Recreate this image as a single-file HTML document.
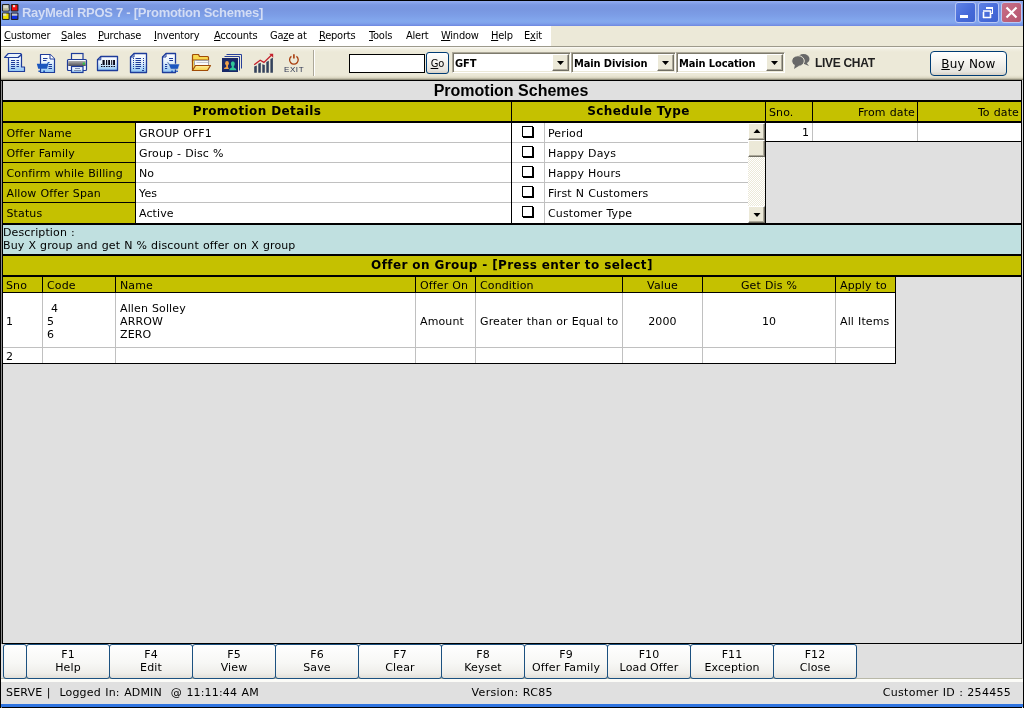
<!DOCTYPE html>
<html><head><meta charset="utf-8"><title>RayMedi RPOS 7 - [Promotion Schemes]</title>
<style>
*{box-sizing:border-box;margin:0;padding:0}
html,body{width:1024px;height:708px;overflow:hidden;background:#000}
body{position:relative;font-family:"DejaVu Sans","Liberation Sans",sans-serif;font-size:11px;color:#000;line-height:13px}
#win{position:absolute;left:0;top:0;width:1024px;height:708px;background:#000;overflow:hidden;will-change:transform}
#win div,#win svg{position:absolute}
.t{white-space:pre}
u{text-decoration:underline}
.g{background:#e0e0e0}
.y{background:#c5c100}
.w{background:#fff}
.k{background:#000}
.lg{background:#c0c0c0}
.cy{background:#c0e0e0}
.bg{background:#ece9d8}
.v{font:11px/13px "DejaVu Sans","Liberation Sans",sans-serif;letter-spacing:0.12px;word-spacing:0.4px}
.b12{font:bold 12px/14px "DejaVu Sans","Liberation Sans",sans-serif;letter-spacing:0.4px}
.m{font:11px/13px "DejaVu Sans Condensed","Liberation Sans",sans-serif;letter-spacing:-0.22px}
.tb{font:bold 11px/13px "DejaVu Sans Condensed","Liberation Sans",sans-serif;letter-spacing:-0.12px}
.r{text-align:right}
.c{text-align:center}
.xpb{border:1px solid #003c74;border-radius:3px;background:linear-gradient(180deg,#ffffff 0%,#f4f3ee 45%,#e6e5df 85%,#d6d0c5 100%)}
.fk{border:1px solid #1c5180;border-radius:3px;background:linear-gradient(180deg,#ffffff 0%,#f7f7f5 55%,#efeeea 85%,#e2dfd8 100%);text-align:center;font:11px/13px "DejaVu Sans","Liberation Sans",sans-serif;letter-spacing:0.12px;padding-top:3px;white-space:pre}
.cmb{background:#fff;border:1px solid;border-color:#aca899 #fff #fff #aca899;box-shadow:inset 1px 1px 0 #7d7a6c, inset -1px -1px 0 #ece9d8}
.cbtn{background:#ece9d8;border:1px solid;border-color:#fff #716f64 #716f64 #fff;box-shadow:inset -1px -1px 0 #aca899}
.chk{background:#fff;border:1px solid #000;box-shadow:1px 1px 0 #000}
</style></head><body>
<div id="win">

<div class="" style="left:1px;top:1px;width:1022px;height:25px;background:linear-gradient(180deg,#93adf0 0px,#86a2ea 2px,#7b98e2 4px,#7896e0 8px,#7c9de6 14px,#83a8ee 20px,#81a4ec 22px,#7692e6 24px,#6c86de 25px)"></div>
<svg style="left:2px;top:4px" width="17" height="16" viewBox="0 0 15.500 15" preserveAspectRatio="none">
<rect x="0" y="0" width="7" height="7" rx="1" fill="#222"/><rect x="1" y="1" width="5" height="5" fill="#d8d8c8"/><rect x="1" y="4" width="5" height="2" fill="#b8b890"/>
<rect x="8" y="0" width="7" height="7" rx="1" fill="#222"/><rect x="9" y="1" width="5" height="5" fill="#f01010"/><rect x="10" y="1" width="2" height="2" fill="#e8d8d0"/>
<rect x="0" y="8" width="7" height="7" rx="1" fill="#222"/><rect x="1" y="9" width="5" height="5" fill="#f0e000"/><rect x="1" y="9" width="3" height="2" fill="#e0e0d0"/>
<rect x="8" y="8" width="7" height="7" rx="1" fill="#222"/><rect x="9" y="9" width="5" height="5" fill="#1030e0"/><rect x="9" y="9" width="5" height="2" fill="#c8c8c0"/>
</svg>
<div class="t " style="left:22px;top:5px;font:bold 13px/16px 'Liberation Sans',sans-serif;color:#d3ddf5;letter-spacing:-0.27px">RayMedi RPOS 7 - [Promotion Schemes]</div>
<div style="left:955px;top:2px;width:21px;height:21px;border-radius:3px;border:1px solid #b9c8f4;background:linear-gradient(135deg,#5f82e6,#4569d8 60%,#3f63d0)"><div style="left:4px;top:12px;width:8px;height:3px;background:#fff"></div></div>
<div style="left:978px;top:2px;width:21px;height:21px;border-radius:3px;border:1px solid #b9c8f4;background:linear-gradient(135deg,#5f82e6,#4569d8 60%,#3f63d0)"><svg style="left:0;top:0" width="19" height="19" viewBox="0 0 19 19"><path d="M7 5.5h7M7 4.5h7M13.500 4v7M7.5 4v2M11 10.500h3" stroke="#fff" stroke-width="1" fill="none"/><path d="M4 8h8M4.500 9v6M4 14.500h8M11.500 8v7" stroke="#fff" stroke-width="1.600" fill="none"/></svg></div>
<div style="left:1001px;top:2px;width:21px;height:21px;border-radius:3px;border:1px solid #b9c8f4;background:linear-gradient(135deg,#c8708a,#bd5f78 60%,#b3566e)"><svg style="left:0;top:0" width="19" height="19" viewBox="0 0 19 19"><path d="M4.500 4.500l10 10M14.500 4.500l-10 10" stroke="#fff" stroke-width="2.200" fill="none"/></svg></div>
<div class="bg" style="left:1px;top:26px;width:1022px;height:20px;"></div>
<div class="w" style="left:1px;top:26px;width:550px;height:20px;"></div>
<div class="t m" style="left:4px;top:29px;"><u>C</u>ustomer</div>
<div class="t m" style="left:61px;top:29px;"><u>S</u>ales</div>
<div class="t m" style="left:98px;top:29px;"><u>P</u>urchase</div>
<div class="t m" style="left:154px;top:29px;"><u>I</u>nventory</div>
<div class="t m" style="left:214px;top:29px;"><u>A</u>ccounts</div>
<div class="t m" style="left:270px;top:29px;">Ga<u>z</u>e at</div>
<div class="t m" style="left:319px;top:29px;"><u>R</u>eports</div>
<div class="t m" style="left:369px;top:29px;"><u>T</u>ools</div>
<div class="t m" style="left:406px;top:29px;">Alert</div>
<div class="t m" style="left:441px;top:29px;"><u>W</u>indow</div>
<div class="t m" style="left:491px;top:29px;"><u>H</u>elp</div>
<div class="t m" style="left:524px;top:29px;">E<u>x</u>it</div>
<div class="" style="left:1px;top:46px;width:1022px;height:1px;background:#9d9a8c"></div>
<div class="" style="left:1px;top:47px;width:1022px;height:33px;background:linear-gradient(180deg,#fbfaf6 0%,#f1efe2 6%,#ece9d8 15%,#ece9d8 85%,#e0dcc8 92%,#b5b19c 97%,#6c6a5c 100%)"></div>
<svg style="left:0;top:0" width="0" height="0"><defs>
<linearGradient id="gb" x1="0" y1="0" x2="0" y2="1"><stop offset="0" stop-color="#ffffff"/><stop offset="0.45" stop-color="#e4f1fd"/><stop offset="1" stop-color="#8cc4f4"/></linearGradient>
<linearGradient id="gp" x1="0" y1="0" x2="0" y2="1"><stop offset="0" stop-color="#b0b0b0"/><stop offset="1" stop-color="#505058"/></linearGradient>
<linearGradient id="gf" x1="0" y1="0" x2="0" y2="1"><stop offset="0" stop-color="#fff0a0"/><stop offset="1" stop-color="#f8d048"/></linearGradient>
</defs></svg>
<svg style="left:4px;top:52px" width="22" height="21" viewBox="0 0 22 21">
<path d="M4.500 5.500 V19.500 H20.500 V15 H17.500 V2.500 L14 5.500 Z" fill="url(#gb)" stroke="#1e3c9a" stroke-width="1.200" stroke-linejoin="round"/>
<path d="M0.600 5.500 L4.300 1.500 H16.500 L17.500 2.500 L14 5.500 Z" fill="#e8f2fc" stroke="#1e3c9a" stroke-width="1.200" stroke-linejoin="round"/>
<path d="M7 8.500h4M12.500 8.500h2.500M7 10.500h4M12.500 10.500h2.500M7 12.500h4M12.500 12.500h2.500M7 14.500h4M12.500 14.500h2.500M7 16.500h4" stroke="#1e3c9a" stroke-width="1"/>
</svg>
<svg style="left:36px;top:53px" width="20" height="20" viewBox="0 0 20 20">
<path d="M4.500 1.500 H14 L18.500 6 V19.500 H4.500 Z" fill="url(#gb)" stroke="#1e3c9a" stroke-width="1.200" stroke-linejoin="round"/>
<path d="M14 1.500 V6 H18.500" fill="#fff" stroke="#1e3c9a" stroke-width="1"/>
<path d="M7 5.500h4.500M7 7.500h3.500M12.500 11.500h3.500M12.500 13.500h3.500M12.500 15.500h3.500" stroke="#1e3c9a" stroke-width="1"/>
<path d="M0.800 10.800 H11 L12 9 H13.800 L13.400 10 H12.600 L11 15.800 H2.200 Z" fill="#1a56be"/>
<rect x="2.400" y="17.500" width="1.800" height="1.500" fill="#1a56be"/><rect x="7.200" y="17.500" width="1.800" height="1.500" fill="#1a56be"/>
</svg>
<svg style="left:66px;top:52px" width="22" height="22" viewBox="0 0 22 22">
<rect x="5.500" y="1.500" width="11.500" height="7" fill="#f2f0e4" stroke="#1e3c9a" stroke-width="1.200"/>
<rect x="1.500" y="7.500" width="19" height="11" rx="1" fill="#f4f8fe" stroke="#1e3c9a" stroke-width="1.200"/>
<rect x="2.200" y="9" width="17.600" height="5" fill="url(#gp)"/>
<rect x="16.800" y="10.600" width="2" height="2" fill="#28d040"/>
<rect x="5.500" y="14.500" width="11.500" height="6" fill="url(#gb)" stroke="#1e3c9a" stroke-width="1.200"/>
<path d="M9 16.500h5M8 18.500h7" stroke="#8090b0" stroke-width="1"/>
</svg>
<svg style="left:96px;top:55px" width="23" height="17" viewBox="0 0 23 17">
<path d="M4.800 1.500 H21.500 V15.500 H1.500 V4.800 Z" fill="url(#gb)" stroke="#1e3c9a" stroke-width="1.300" stroke-linejoin="round"/>
<path d="M4.800 1.500 V4.800 H1.500" fill="none" stroke="#1e3c9a" stroke-width="1"/>
<path d="M6.500 5h2.200v5h-2.200zM10 5h1.200v5h-1.200zM12.200 5h1.800v5h-1.800zM15.200 5h1v5h-1zM17.100 5h1.900v5h-1.900z" fill="#08081a"/>
<path d="M5.500 9v1" stroke="#08081a" stroke-width="1"/>
<path d="M5 11.500h14.500" stroke="#08081a" stroke-width="1" stroke-dasharray="1.500 1"/>
</svg>
<svg style="left:129px;top:52px" width="19" height="22" viewBox="0 0 19 22">
<path d="M5 1.500 H17.500 V20.500 H1.500 V5 Z" fill="url(#gb)" stroke="#1e3c9a" stroke-width="1.300" stroke-linejoin="round"/>
<path d="M1.500 5 H5 V1.500" fill="none" stroke="#1e3c9a" stroke-width="1"/>
<path d="M4 6.500h1M6.500 6.500h5.500M14 6.500h1M4 8.500h1M6.500 8.500h5.500M14 8.500h1M4 10.500h1M6.500 10.500h5.500M14 10.500h1M4 12.500h1M6.500 12.500h5.500M14 12.500h1M4 14.500h1M6.500 14.500h5.500M14 14.500h1M4 16.500h1M6.500 16.500h4.500M14 16.500h1M13 18.500h2" stroke="#1e3c9a" stroke-width="1"/>
</svg>
<svg style="left:161px;top:52px" width="20" height="22" viewBox="0 0 20 22">
<path d="M5 1.500 H14.500 V20.500 H1.500 V5 Z" fill="url(#gb)" stroke="#1e3c9a" stroke-width="1.300" stroke-linejoin="round"/>
<path d="M1.500 5 H5 V1.500" fill="none" stroke="#1e3c9a" stroke-width="1"/>
<path d="M8 6.500h4M8.300 8.500h3.700M4 12.500h2.200M4 14.500h2.200M4 16.500h2.200" stroke="#1e3c9a" stroke-width="1"/>
<path d="M5.800 10 L7 10 L8.600 12 H18.600 L17 17.200 H9.600 L7.600 12.400 Z" fill="#1c58c0" stroke="#ece9d8" stroke-width="0.500"/>
<rect x="10.200" y="18.600" width="1.700" height="1.400" fill="#1c58c0"/><rect x="15.200" y="18.600" width="1.700" height="1.400" fill="#1c58c0"/>
</svg>
<svg style="left:191px;top:53px" width="21" height="19" viewBox="0 0 21 19">
<path d="M1.500 2.500 Q1.500 1.500 2.500 1.500 H7.500 L8.500 3.500 H16.500 Q17.500 3.500 17.500 4.500 V9 H1.500 Z" fill="#f8d850" stroke="#a04c08" stroke-width="1.200" stroke-linejoin="round"/>
<path d="M1.500 7 V17.500 H16 V7 Z" fill="#f8dc60" stroke="#a04c08" stroke-width="1.200"/>
<path d="M3.500 12.500 V8.500 Q3.500 7.500 4.500 7.500 H17.500 V12" fill="#fafafa" stroke="#a0a0a8" stroke-width="1"/>
<path d="M5.500 9.500H17" stroke="#c8c8d0" stroke-width="1"/>
<path d="M4.500 12.500 H19.500 L16.500 17.500 H1.500 Z" fill="url(#gf)" stroke="#a04c08" stroke-width="1.200" stroke-linejoin="round"/>
</svg>
<svg style="left:221px;top:53px" width="23" height="20" viewBox="0 0 23 20">
<path d="M5.500 1.500 H20.500 V15.500" fill="none" stroke="#28409a" stroke-width="1"/>
<path d="M3.500 3.500 H18.500 V17.500" fill="none" stroke="#28409a" stroke-width="1"/>
<rect x="1" y="5" width="16" height="14" fill="#182868"/>
<ellipse cx="6" cy="10.300" rx="1.900" ry="2.400" fill="#f0a048"/><path d="M5.200 12 V14 Q3 14.500 2.800 16 H8 L7 14 V12Z" fill="#f0a048"/>
<ellipse cx="11.800" cy="10.800" rx="2" ry="2.500" fill="#30c898"/><path d="M10.800 12.500 V14.500 Q8.500 15.200 8 17.200 H15.600 Q15.100 15.200 12.800 14.500 V12.500Z" fill="#30c898"/>
</svg>
<svg style="left:253px;top:52px" width="22" height="22" viewBox="0 0 22 22">
<path d="M1.200 14.600 L3.800 13.600 V20.700 H1.200Z M5.300 11.800 L7.800 10.800 V20.700 H5.300Z M9.300 12.200 L11.800 13 V20.700 H9.300Z M13.300 10 L15.800 8.800 V20.700 H13.300Z M17.400 7 L19.900 5.800 V20.700 H17.400Z" fill="#34425c"/>
<path d="M1.200 12.700 L7.200 8.200 L10.900 10.400 L18.600 3" fill="none" stroke="#c4202c" stroke-width="1.300"/>
<path d="M16.200 1.800 H20.200 V5.800 Z" fill="#c4202c"/>
</svg>
<svg style="left:287px;top:53px" width="14" height="12" viewBox="0 0 14 12">
<path d="M4.400 3.400 A4.300 4.300 0 1 0 9.400 3.400" fill="none" stroke="#a83c0c" stroke-width="1.300"/>
<path d="M6.900 1.200V5.600" stroke="#a83c0c" stroke-width="1.600"/>
</svg>
<div class="t " style="left:284px;top:66px;font:8px/8px 'Liberation Sans',sans-serif;color:#2c3450;letter-spacing:0.600px">EXIT</div>
<div class="" style="left:313px;top:50px;width:1px;height:26px;background:#aca899"></div>
<div class="" style="left:314px;top:50px;width:1px;height:26px;background:#fff"></div>
<div class="w" style="left:349px;top:54px;width:76px;height:19px;border:1px solid #000"></div>
<div class="xpb" style="left:426px;top:52px;width:23px;height:22px;text-align:center;font:11px/22px 'DejaVu Sans Condensed',sans-serif;white-space:pre"><u>G</u>o</div>
<div class="cmb" style="left:452px;top:52px;width:119px;height:21px;"></div>
<div class="cbtn" style="left:552px;top:54px;width:17px;height:17px;"><svg style="left:4px;top:6px" width="7" height="4" viewBox="0 0 7 4"><path d="M0 0H7L3.500 4Z" fill="#000"/></svg></div>
<div class="t tb" style="left:455px;top:57px;">GFT</div>
<div class="cmb" style="left:571px;top:52px;width:105px;height:21px;"></div>
<div class="cbtn" style="left:657px;top:54px;width:17px;height:17px;"><svg style="left:4px;top:6px" width="7" height="4" viewBox="0 0 7 4"><path d="M0 0H7L3.500 4Z" fill="#000"/></svg></div>
<div class="t tb" style="left:574px;top:57px;">Main Division</div>
<div class="cmb" style="left:676px;top:52px;width:109px;height:21px;"></div>
<div class="cbtn" style="left:766px;top:54px;width:17px;height:17px;"><svg style="left:4px;top:6px" width="7" height="4" viewBox="0 0 7 4"><path d="M0 0H7L3.500 4Z" fill="#000"/></svg></div>
<div class="t tb" style="left:679px;top:57px;">Main Location</div>
<svg style="left:791px;top:53px" width="20" height="17" viewBox="0 0 20 17">
<ellipse cx="12.500" cy="6" rx="6" ry="5" fill="#686868"/><path d="M15 9 L18 13 L12 10.500Z" fill="#686868"/>
<ellipse cx="7" cy="8" rx="6.300" ry="5.300" fill="#686868" stroke="#ece9d8" stroke-width="1"/><path d="M4 11.500 L3 16 L8.500 12.500Z" fill="#686868"/>
</svg>
<div class="t " style="left:815px;top:56px;font:bold 12px/14px 'Liberation Sans',sans-serif;color:#202020;letter-spacing:-0.300px">LIVE CHAT</div>
<div class="xpb" style="left:930px;top:51px;width:77px;height:25px;text-align:center;font:12px/24px 'DejaVu Sans',sans-serif;white-space:pre;border-radius:4px;letter-spacing:0.2px"><u>B</u>uy Now</div>
<div class="k" style="left:1px;top:80px;width:1021px;height:564px;"></div>
<div class="" style="left:1px;top:81px;width:1px;height:627px;background:#8c8c8c"></div>
<div class="" style="left:1022px;top:80px;width:1px;height:628px;background:#d8d8d8"></div>
<div class="g" style="left:3px;top:81px;width:1018px;height:19px;"></div>
<div class="t c" style="left:2px;top:82px;width:1018px;font:bold 16px/18px 'Liberation Sans',sans-serif;color:#000">Promotion Schemes</div>
<div class="y" style="left:3px;top:102px;width:508px;height:19px;"></div>
<div class="t b12 c" style="left:3px;top:104px;width:508px">Promotion Details</div>
<div class="y" style="left:512px;top:102px;width:253px;height:19px;"></div>
<div class="t b12 c" style="left:512px;top:104px;width:253px">Schedule Type</div>
<div class="y" style="left:766px;top:102px;width:46px;height:19px;"></div>
<div class="t v" style="left:769px;top:106px;">Sno.</div>
<div class="y" style="left:813px;top:102px;width:104px;height:19px;"></div>
<div class="t v r" style="left:813px;top:106px;width:102px">From date</div>
<div class="y" style="left:918px;top:102px;width:103px;height:19px;"></div>
<div class="t v r" style="left:918px;top:106px;width:101px">To date</div>
<div class="y" style="left:3px;top:123px;width:132px;height:19px;"></div>
<div class="t v" style="left:6.5px;top:127px;">Offer Name</div>
<div class="w" style="left:136px;top:123px;width:375px;height:19px;"></div>
<div class="t v" style="left:139px;top:127px;">GROUP OFF1</div>
<div class="w" style="left:512px;top:123px;width:236px;height:19px;"></div>
<div class="chk" style="left:522px;top:126px;width:11px;height:11px;"></div>
<div class="t v" style="left:548px;top:127px;">Period</div>
<div class="lg" style="left:136px;top:142px;width:375px;height:1px;"></div>
<div class="lg" style="left:512px;top:142px;width:236px;height:1px;"></div>
<div class="y" style="left:3px;top:143px;width:132px;height:19px;"></div>
<div class="t v" style="left:6.5px;top:147px;">Offer Family</div>
<div class="w" style="left:136px;top:143px;width:375px;height:19px;"></div>
<div class="t v" style="left:139px;top:147px;">Group - Disc %</div>
<div class="w" style="left:512px;top:143px;width:236px;height:19px;"></div>
<div class="chk" style="left:522px;top:146px;width:11px;height:11px;"></div>
<div class="t v" style="left:548px;top:147px;">Happy Days</div>
<div class="lg" style="left:136px;top:162px;width:375px;height:1px;"></div>
<div class="lg" style="left:512px;top:162px;width:236px;height:1px;"></div>
<div class="y" style="left:3px;top:163px;width:132px;height:19px;"></div>
<div class="t v" style="left:6.5px;top:167px;">Confirm while Billing</div>
<div class="w" style="left:136px;top:163px;width:375px;height:19px;"></div>
<div class="t v" style="left:139px;top:167px;">No</div>
<div class="w" style="left:512px;top:163px;width:236px;height:19px;"></div>
<div class="chk" style="left:522px;top:166px;width:11px;height:11px;"></div>
<div class="t v" style="left:548px;top:167px;">Happy Hours</div>
<div class="lg" style="left:136px;top:182px;width:375px;height:1px;"></div>
<div class="lg" style="left:512px;top:182px;width:236px;height:1px;"></div>
<div class="y" style="left:3px;top:183px;width:132px;height:19px;"></div>
<div class="t v" style="left:6.5px;top:187px;">Allow Offer Span</div>
<div class="w" style="left:136px;top:183px;width:375px;height:19px;"></div>
<div class="t v" style="left:139px;top:187px;">Yes</div>
<div class="w" style="left:512px;top:183px;width:236px;height:19px;"></div>
<div class="chk" style="left:522px;top:186px;width:11px;height:11px;"></div>
<div class="t v" style="left:548px;top:187px;">First N Customers</div>
<div class="lg" style="left:136px;top:202px;width:375px;height:1px;"></div>
<div class="lg" style="left:512px;top:202px;width:236px;height:1px;"></div>
<div class="y" style="left:3px;top:203px;width:132px;height:20px;"></div>
<div class="t v" style="left:6.5px;top:207px;">Status</div>
<div class="w" style="left:136px;top:203px;width:375px;height:20px;"></div>
<div class="t v" style="left:139px;top:207px;">Active</div>
<div class="w" style="left:512px;top:203px;width:236px;height:20px;"></div>
<div class="chk" style="left:522px;top:206px;width:11px;height:11px;"></div>
<div class="t v" style="left:548px;top:207px;">Customer Type</div>
<div class="lg" style="left:544px;top:123px;width:1px;height:100px;"></div>
<div class="" style="left:748px;top:123px;width:17px;height:100px;background:#f6f5ee;background-image:conic-gradient(#fff 25%,#ece9d8 0 50%,#fff 0 75%,#ece9d8 0);background-size:2px 2px"></div>
<div class="" style="left:748px;top:123px;width:17px;height:17px;background:#ece9d8;border:1px solid;border-color:#fff #716f64 #716f64 #fff;box-shadow:inset -1px -1px 0 #aca899"><svg style="left:4px;top:5px" width="8" height="4" viewBox="0 0 8 4"><path d="M0.500 4H7.500L4 0Z" fill="#000"/></svg></div>
<div class="" style="left:748px;top:140px;width:17px;height:17px;background:#ece9d8;border:1px solid;border-color:#fff #716f64 #716f64 #fff;box-shadow:inset -1px -1px 0 #aca899"></div>
<div class="" style="left:748px;top:206px;width:17px;height:17px;background:#ece9d8;border:1px solid;border-color:#fff #716f64 #716f64 #fff;box-shadow:inset -1px -1px 0 #aca899"><svg style="left:4px;top:6px" width="8" height="4" viewBox="0 0 8 4"><path d="M0.500 0H7.500L4 4Z" fill="#000"/></svg></div>
<div class="w" style="left:766px;top:123px;width:255px;height:18px;"></div>
<div class="lg" style="left:812px;top:123px;width:1px;height:18px;"></div>
<div class="lg" style="left:917px;top:123px;width:1px;height:18px;"></div>
<div class="t v r" style="left:766px;top:126px;width:43px">1</div>
<div class="g" style="left:766px;top:142px;width:255px;height:81px;"></div>
<div class="cy" style="left:3px;top:225px;width:1018px;height:29px;"></div>
<div class="t v" style="left:3px;top:226px;">Description :
Buy X group and get N % discount offer on X group</div>
<div class="y" style="left:3px;top:256px;width:1018px;height:19px;"></div>
<div class="t b12 c" style="left:3px;top:258px;width:1018px">Offer on Group - [Press enter to select]</div>
<div class="g" style="left:896px;top:277px;width:125px;height:366px;"></div>
<div class="g" style="left:3px;top:364px;width:893px;height:279px;"></div>
<div class="y" style="left:3px;top:277px;width:39px;height:15px;"></div>
<div class="w" style="left:3px;top:293px;width:39px;height:54px;"></div>
<div class="w" style="left:3px;top:348px;width:39px;height:15px;"></div>
<div class="t v" style="left:6px;top:279px;">Sno</div>
<div class="t v" style="left:6px;top:315px;">1</div>
<div class="y" style="left:43px;top:277px;width:72px;height:15px;"></div>
<div class="w" style="left:43px;top:293px;width:72px;height:54px;"></div>
<div class="w" style="left:43px;top:348px;width:72px;height:15px;"></div>
<div class="lg" style="left:42px;top:293px;width:1px;height:70px;"></div>
<div class="t v" style="left:47px;top:279px;">Code</div>
<div class="t v" style="left:47px;top:302px;"> 4
5
6</div>
<div class="y" style="left:116px;top:277px;width:299px;height:15px;"></div>
<div class="w" style="left:116px;top:293px;width:299px;height:54px;"></div>
<div class="w" style="left:116px;top:348px;width:299px;height:15px;"></div>
<div class="lg" style="left:115px;top:293px;width:1px;height:70px;"></div>
<div class="t v" style="left:120px;top:279px;">Name</div>
<div class="t v" style="left:120px;top:302px;">Allen Solley
ARROW
ZERO</div>
<div class="y" style="left:416px;top:277px;width:59px;height:15px;"></div>
<div class="w" style="left:416px;top:293px;width:59px;height:54px;"></div>
<div class="w" style="left:416px;top:348px;width:59px;height:15px;"></div>
<div class="lg" style="left:415px;top:293px;width:1px;height:70px;"></div>
<div class="t v" style="left:420px;top:279px;">Offer On</div>
<div class="t v" style="left:420px;top:315px;">Amount</div>
<div class="y" style="left:476px;top:277px;width:146px;height:15px;"></div>
<div class="w" style="left:476px;top:293px;width:146px;height:54px;"></div>
<div class="w" style="left:476px;top:348px;width:146px;height:15px;"></div>
<div class="lg" style="left:475px;top:293px;width:1px;height:70px;"></div>
<div class="t v" style="left:480px;top:279px;">Condition</div>
<div class="t v" style="left:480px;top:315px;">Greater than or Equal to</div>
<div class="y" style="left:623px;top:277px;width:79px;height:15px;"></div>
<div class="w" style="left:623px;top:293px;width:79px;height:54px;"></div>
<div class="w" style="left:623px;top:348px;width:79px;height:15px;"></div>
<div class="lg" style="left:622px;top:293px;width:1px;height:70px;"></div>
<div class="t v c" style="left:623px;top:279px;width:79px">Value</div>
<div class="t v c" style="left:623px;top:315px;width:79px">2000</div>
<div class="y" style="left:703px;top:277px;width:132px;height:15px;"></div>
<div class="w" style="left:703px;top:293px;width:132px;height:54px;"></div>
<div class="w" style="left:703px;top:348px;width:132px;height:15px;"></div>
<div class="lg" style="left:702px;top:293px;width:1px;height:70px;"></div>
<div class="t v c" style="left:703px;top:279px;width:132px">Get Dis %</div>
<div class="t v c" style="left:703px;top:315px;width:132px">10</div>
<div class="y" style="left:836px;top:277px;width:59px;height:15px;"></div>
<div class="w" style="left:836px;top:293px;width:59px;height:54px;"></div>
<div class="w" style="left:836px;top:348px;width:59px;height:15px;"></div>
<div class="lg" style="left:835px;top:293px;width:1px;height:70px;"></div>
<div class="t v" style="left:840px;top:279px;">Apply to</div>
<div class="t v" style="left:840px;top:315px;">All Items</div>
<div class="lg" style="left:3px;top:347px;width:892px;height:1px;"></div>
<div class="t v" style="left:6px;top:350px;">2</div>
<div class="g" style="left:1px;top:644px;width:1021px;height:35px;"></div>
<div class="" style="left:1px;top:678px;width:1021px;height:1px;background:#b8b8a8"></div>
<div class="fk" style="left:3px;top:644px;width:24px;height:35px;"></div>
<div class="fk" style="left:26px;top:644px;width:84px;height:35px;">F1
Help</div>
<div class="fk" style="left:109px;top:644px;width:84px;height:35px;">F4
Edit</div>
<div class="fk" style="left:192px;top:644px;width:84px;height:35px;">F5
View</div>
<div class="fk" style="left:275px;top:644px;width:84px;height:35px;">F6
Save</div>
<div class="fk" style="left:358px;top:644px;width:84px;height:35px;">F7
Clear</div>
<div class="fk" style="left:441px;top:644px;width:84px;height:35px;">F8
Keyset</div>
<div class="fk" style="left:524px;top:644px;width:84px;height:35px;">F9
Offer Family</div>
<div class="fk" style="left:607px;top:644px;width:84px;height:35px;">F10
Load Offer</div>
<div class="fk" style="left:690px;top:644px;width:84px;height:35px;">F11
Exception</div>
<div class="fk" style="left:773px;top:644px;width:84px;height:35px;">F12
Close</div>
<div class="" style="left:1px;top:679px;width:1022px;height:3px;background:#fcfcf8"></div>
<div class="g" style="left:1px;top:682px;width:1022px;height:22px;"></div>
<div class="t v" style="left:6px;top:686px;letter-spacing:0.16px;word-spacing:0.8px">SERVE |  Logged In: ADMIN  @ 11:11:44 AM</div>
<div class="t v" style="left:471.5px;top:686px;letter-spacing:0.35px">Version: RC85</div>
<div class="t v r" style="left:800px;top:686px;width:211px;letter-spacing:0.28px">Customer ID : 254455</div>
<div class="" style="left:1px;top:704px;width:1022px;height:3px;background:#2f74e0"></div>
</div>
</body></html>
